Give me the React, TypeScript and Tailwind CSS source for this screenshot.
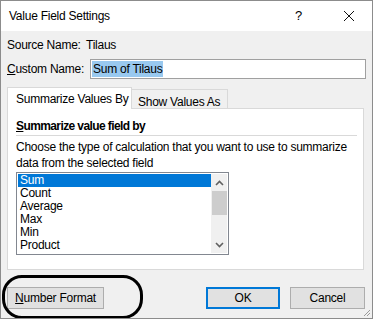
import React from 'react';

const items = ['Sum', 'Count', 'Average', 'Max', 'Min', 'Product'];

const Chevron = ({ up }: { up?: boolean }) => (
    <svg width="9" height="6" viewBox="0 0 9 6" className="block">
        <path d={up ? 'M1 5 L4.5 1.5 L8 5' : 'M1 1 L4.5 4.5 L8 1'} fill="none" stroke="#606060" strokeWidth="1.6" />
    </svg>
);

export default function App() {
    return (
        <div
            className="relative w-[373px] h-[319px] overflow-hidden bg-[#f0f0f0] border border-[#8c8c8c] text-[12px] leading-[16px] tracking-[-0.25px] text-black whitespace-nowrap"
            style={{ fontFamily: '"Liberation Sans", Arial, sans-serif' }}
        >
            {/* title bar */}
            <div className="h-[30px] bg-white flex items-center pl-[8px]">
                <span className="flex-1">Value Field Settings</span>
                <span className="w-[10px] text-[13px] mr-[38px]">?</span>
                <svg width="12" height="12" viewBox="0 0 12 12" className="mr-[17px]">
                    <path d="M1 1 L11 11 M11 1 L1 11" stroke="#111" strokeWidth="1" />
                </svg>
            </div>

            <div className="px-[6px]">
                <div className="mt-[6px] h-[16px] flex">
                    <span className="w-[79px]">Source Name:</span>
                    <span>Tilaus</span>
                </div>

                <div className="mt-[6px] flex items-center">
                    <span className="w-[83px]">
                        <span className="underline">C</span>ustom Name:
                    </span>
                    <div className="w-[276px] h-[20px] bg-white border border-[#a0a0a0] flex items-center px-[1px]">
                        <span className="bg-[#99c9ef] px-[1px] leading-[16px]">Sum of Tilaus</span>
                    </div>
                </div>

                {/* tabs */}
                <div className="mt-[8px] flex items-end h-[21px]">
                    <div className="h-[22px] -mb-px relative z-10 bg-white border border-b-0 border-[#d9d9d9] pl-[8px] pt-[3px] w-[125px]">
                        Summarize Values By
                    </div>
                    <div className="h-[19px] bg-[#f0f0f0] border border-l-0 border-b-0 border-[#d9d9d9] pl-[6px] pt-[4px] w-[96px]">
                        Show Values As
                    </div>
                </div>

                <div className="w-[357px] h-[162px] bg-white border border-[#d9d9d9] pl-[8px] pr-[6px] pt-[9px]">
                    <div className="font-bold tracking-[-0.6px]">
                        <span className="underline">S</span>ummarize value field by
                    </div>
                    <div className="mt-[1px] h-px bg-[#d9d9d9]" />
                    <p className="mt-[3px]">
                        Choose the type of calculation that you want to use to summarize
                        <br />
                        data from the selected field
                    </p>
                    <div className="mt-[1px] w-[213px] h-[83px] border border-[#828790] flex p-px">
                        <div className="flex-1 leading-[13px]">
                            {items.map((it, i) => (
                                <div
                                    key={it}
                                    className={
                                        i === 0
                                            ? 'h-[13px] pl-[2px] bg-[#0078d7] text-white'
                                            : 'h-[13px] pl-[2px]'
                                    }
                                >
                                    {it}
                                </div>
                            ))}
                        </div>
                        <div className="w-[16px] bg-[#f0f0f0] flex flex-col items-center">
                            <div className="h-[17px] flex items-center justify-center">
                                <Chevron up />
                            </div>
                            <div className="w-[15px] h-[24px] bg-[#cdcdcd]" />
                            <div className="flex-1" />
                            <div className="h-[17px] flex items-center justify-center">
                                <Chevron />
                            </div>
                        </div>
                    </div>
                </div>

                {/* buttons */}
                <div className="mt-[17px] flex items-center">
                    <button className="w-[97px] h-[22px] bg-[#e1e1e1] border border-[#adadad] text-[12px]">
                        <span className="underline">N</span>umber Format
                    </button>
                    <div className="flex-1" />
                    <button className="w-[74px] h-[22px] bg-[#e1e1e1] border-2 border-[#0078d7] text-[12px]">
                        OK
                    </button>
                    <button className="ml-[10px] mr-[1px] w-[75px] h-[22px] bg-[#e1e1e1] border border-[#adadad] text-[12px]">
                        Cancel
                    </button>
                </div>
            </div>

            {/* hand-drawn annotation around Number Format */}
            <div className="absolute left-[1px] top-[274px] w-[141px] h-[44px] border-[3px] border-black rounded-[20px]" />

            {/* resize grip */}
            <svg width="10" height="10" viewBox="0 0 10 10" className="absolute right-[1px] bottom-[1px]">
                <path d="M9 3 L3 9 M9 6 L6 9" stroke="#9a9a9a" strokeWidth="1" />
            </svg>
        </div>
    );
}
